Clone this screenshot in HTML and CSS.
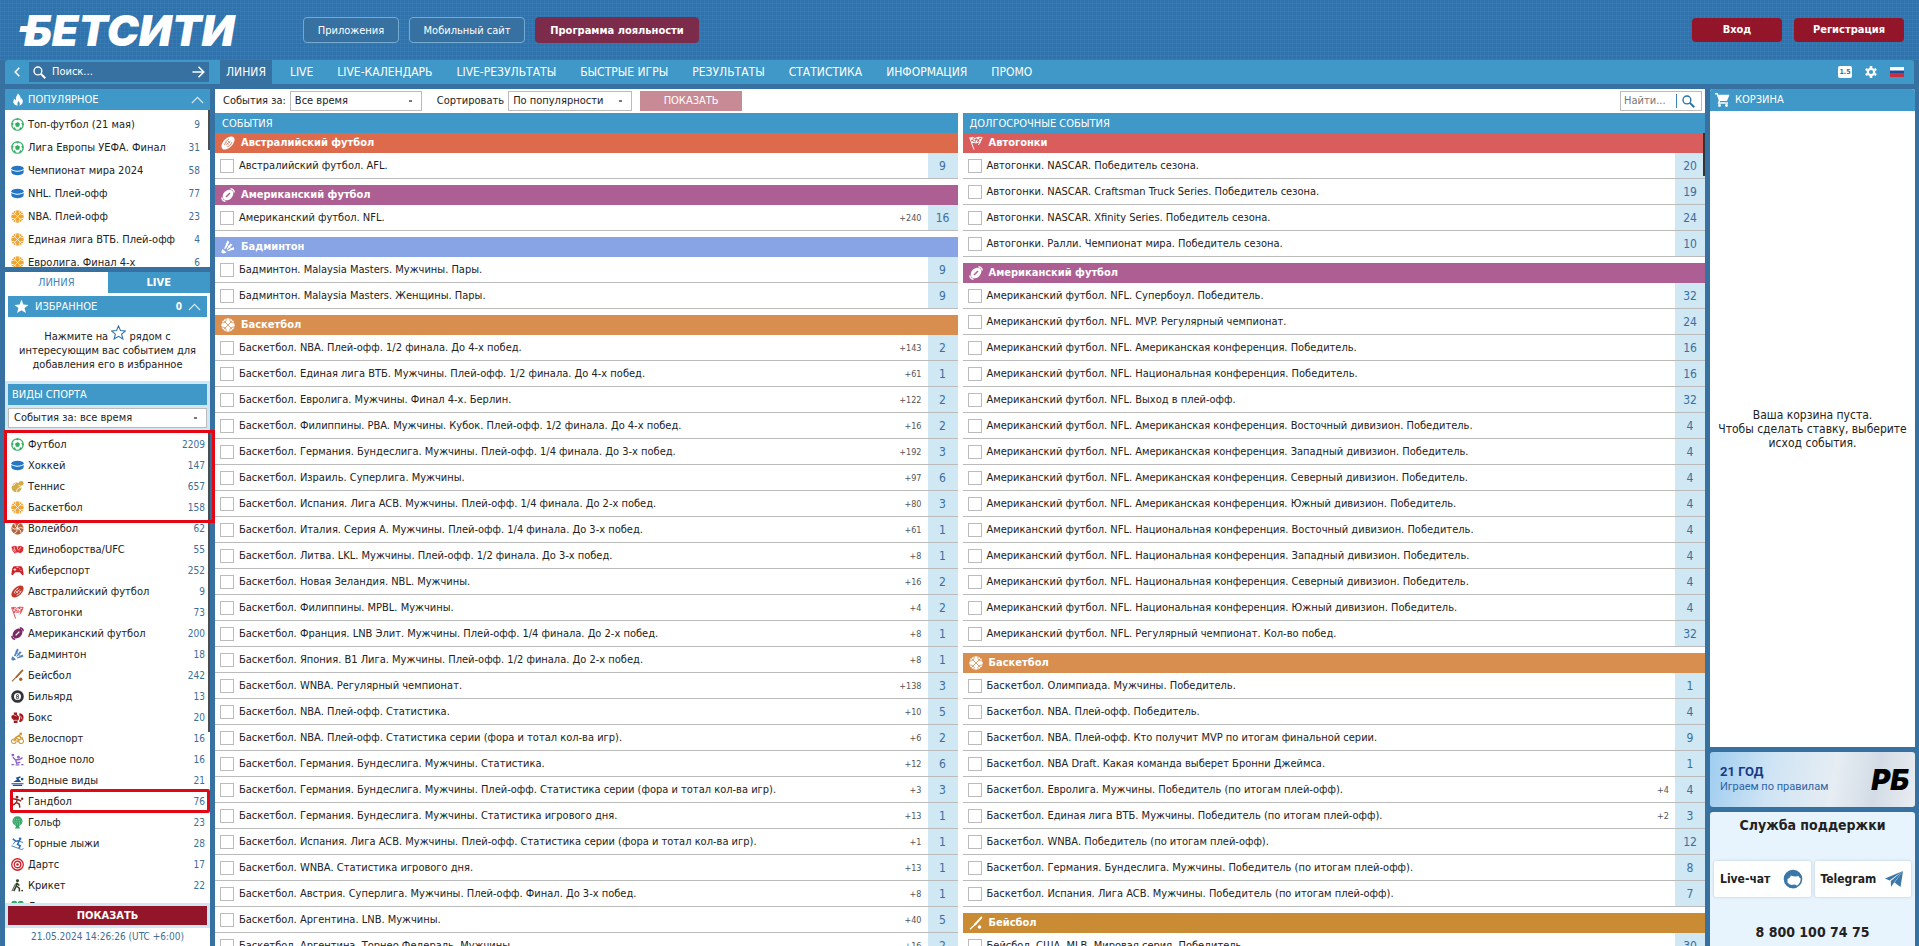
FILE: index.html
```html
<!DOCTYPE html>
<html lang="ru">
<head>
<meta charset="utf-8">
<title>Бетсити — Линия</title>
<meta name="viewport" content="width=device-width, initial-scale=1">
<link rel="stylesheet" href="styles.css">
</head>
<body>
<svg class="sprite" aria-hidden="true">
  <symbol id="soccer" viewBox="0 0 14 14"><circle cx="7" cy="7" r="6.2" fill="none" stroke="currentColor" stroke-width="1.3"/><path fill="currentColor" d="M7 4.3 9.7 6.2 8.7 9.3H5.3L4.3 6.2zM5 .8h4L7 2.8zM.8 5.2 3 6 1.4 8.6zM13.2 5.2 11 6l1.6 2.6zM3 11.8l.6-2.5 2.3 3.6zM11 11.8l-.6-2.5-2.3 3.6z"/></symbol>
  <symbol id="puck" viewBox="0 0 14 14"><ellipse cx="7" cy="4.6" rx="6.6" ry="2.7" fill="currentColor"/><path fill="currentColor" d="M.4 5.9C1.8 9 12.200 9 13.600 5.900V9.200C12.500 13.200 1.500 13.200.4 9.200z"/></symbol>
  <symbol id="basket" viewBox="0 0 14 14"><circle cx="7" cy="7" r="6.700" fill="currentColor"/><path fill="none" stroke="var(--cut,#fff)" stroke-width=".8" d="M2.300 2.300 11.700 11.700M11.700 2.300 2.300 11.700M5 .5Q6 5 .5 5M9 .5Q8 5 13.500 5M5 13.500Q6 9 .5 9M9 13.500Q8 9 13.500 9"/></symbol>
  <symbol id="tennis" viewBox="0 0 14 14"><circle cx="6" cy="8" r="5.300" fill="currentColor"/><circle cx="11" cy="3.600" r="2.600" fill="currentColor"/><path fill="none" stroke="#fff" stroke-width=".9" d="M1 6q3 0 4-3M6 13q0-5 5.500-5M8 5.500q2.500 2 5 1.500"/></symbol>
  <symbol id="volley" viewBox="0 0 14 14"><circle cx="7" cy="7" r="6.600" fill="currentColor"/><path fill="none" stroke="#fff" stroke-width=".9" d="M7 7Q4 5 4 1.200M7 7Q6 3 10 1M7 7q4-2 6.500 0M7 7q4 1 4 5M7 7q0 4-4 5.500M7 7Q3 9 1 6"/></symbol>
  <symbol id="fist" viewBox="0 0 14 14"><path fill="currentColor" d="M.5 4 4 3l3 1 3-1 3.500 1.500-.5 4-2.500 2.500L7 10l-3 1.200L1.500 8z"/><path fill="none" stroke="#fff" stroke-width=".7" d="M3.500 4v3l2 1M7 4v2.500l2 1.500M10.500 4.500 9 7M2 7l3 3"/></symbol>
  <symbol id="pad" viewBox="0 0 14 14"><path fill="currentColor" d="M3 2.500h8l1.500 1.800 1.200 7-1.500.7L9.500 9h-5L1.800 12l-1.500-.7 1.200-7z"/><path fill="none" stroke="#fff" stroke-width=".9" d="M4.200 4.500v3M2.700 6h3M9 5.200h1M10.300 7h1M6 3.500h2"/></symbol>
  <symbol id="afl" viewBox="0 0 14 14"><ellipse cx="7" cy="7" rx="8" ry="4.600" fill="currentColor" transform="rotate(-45 7 7)"/><path fill="none" stroke="var(--cut,#fff)" stroke-width=".8" d="M5 9.300 9.500 4.800M5.500 6.500l2 2M7 5l2 2M3.500 9Q4 5 8 3M6 11q4-1 5-5"/></symbol>
  <symbol id="flags" viewBox="0 0 14 14"><path fill="none" stroke="currentColor" stroke-width="1" d="M.6 1.500 5 13.500M13.300 1.500 9.500 9M1 2q3-1.500 5 .5Q9 .5 13 1.500M2.500 7q3-1.500 4.500 0 2.500-1.500 4.500-.5"/><path fill="currentColor" d="M1.500 2 3.500 1.500 4 3.500 2 4zM4 3.500 6 3.500 6.500 5.500 4.500 5zM8 2l2-1 .3 2-2 .6zM10.500 3.200l2-.2-.6 2-2 .3zM7 4.500l1.500-.6-.5 2-1.300.8zM2.600 5 4 5.200l.5 1.500-1.300.2z"/></symbol>
  <symbol id="nfl" viewBox="0 0 14 14"><ellipse cx="7" cy="7" rx="6" ry="4.500" fill="currentColor" transform="rotate(-45 7 7)"/><path fill="none" stroke="currentColor" stroke-width="1.500" d="M.8 9.500q.5 3.500 3.700 3.700M9.500.8q3.500.5 3.700 3.700"/><path stroke="var(--cut,#fff)" stroke-width="1.400" d="M5 9 9 5"/></symbol>
  <symbol id="shuttle" viewBox="0 0 14 14"><path fill="currentColor" d="M6.500.5 8.300 2 5 8.500 3 9zM9.500 3.500 11.500 4.800 6.500 9.500 5.500 9.200zM12.500 7l1 2.200L7 11.300 6.300 10.500zM1.500 9l4 3.500-3.300 1Q.2 13.500.4 11.500z"/><path stroke="currentColor" d="m5 3 3 4M8 7l4 3" stroke-width=".8"/></symbol>
  <symbol id="bat" viewBox="0 0 14 14"><path stroke="currentColor" stroke-width="2" stroke-linecap="round" d="M12.300 1.600 6 8.500"/><path stroke="currentColor" stroke-width="1.200" d="M7 7.500 1 13.300"/><circle cx="10.500" cy="11" r="1.800" fill="currentColor"/></symbol>
  <symbol id="eight" viewBox="0 0 14 14"><circle cx="7" cy="7" r="5.300" fill="none" stroke="currentColor" stroke-width="3"/><circle cx="7" cy="6" r="1.100" fill="none" stroke="currentColor"/><circle cx="7" cy="8.200" r="1.200" fill="none" stroke="currentColor"/></symbol>
  <symbol id="box" viewBox="0 0 14 14"><path fill="currentColor" d="M3 1.500h3.500V4l2 2v3L7 10.500V13H3V10L.5 7.500V5L3 4zM9 2.500q4 0 4.500 4 .3 4-3.500 5.500L8.500 11Q11 8 9 5z"/><path stroke="#fff" stroke-width=".7" d="M3 10h4M3 4l3 1.500M10 5l2 4"/></symbol>
  <symbol id="bike" viewBox="0 0 14 14"><g fill="none" stroke="currentColor" stroke-width="1.100"><circle cx="3" cy="10" r="2.500"/><circle cx="11" cy="10" r="2.500"/><path stroke-width="1.500" d="m3 10 2-4 4-2.500 1.500 3H13M5 6l3 2-1 3"/></g><circle cx="10.500" cy="2" r="1.500" fill="currentColor"/></symbol>
  <symbol id="polo" viewBox="0 0 14 14"><circle cx="2" cy="2.200" r="1.500" fill="currentColor"/><circle cx="8" cy="4.500" r="1.500" fill="currentColor"/><path fill="none" stroke="currentColor" stroke-width="1.500" d="m2 4.500 3 3 4-.5 3.500-2M5 7l1 4 4-1M.5 12.500h3M5 12.800h4M11 12.500h2.500"/></symbol>
  <symbol id="swim" viewBox="0 0 14 14"><circle cx="12" cy="5.500" r="1.400" fill="currentColor"/><path fill="currentColor" d="m5 4 5-1.500.5 1.300L8 5l3 3.500H2.500L6.500 6z"/><path fill="none" stroke="currentColor" stroke-width="1.200" d="M.5 10.500h13M2 12.300h10"/></symbol>
  <symbol id="hand" viewBox="0 0 14 14"><circle cx="6.500" cy="2.200" r="1.500" fill="currentColor"/><circle cx="12" cy="4" r="1.300" fill="currentColor"/><path fill="none" stroke="currentColor" stroke-width="1.600" d="M1.500 4 7 4.800 11 6.500M6.500 5 6 8l3 2 .5 3.500M6 8l-2.500 2L1 11"/></symbol>
  <symbol id="golf" viewBox="0 0 14 14"><path fill="currentColor" d="M7 .3a5.500 5.500 0 0 1 5.500 5.500Q12.300 9 9 10.500L8.500 12H9.500V13.500h-5V12H5.500L5 10.500Q1.700 9 1.500 5.800A5.500 5.500 0 0 1 7 .3"/><path stroke="#fff" stroke-width=".6" stroke-dasharray="1 1.500" d="M3 4h8M3.500 6.300h8M4 8.600h6"/></symbol>
  <symbol id="ski" viewBox="0 0 14 14"><circle cx="9.800" cy="2" r="1.500" fill="currentColor"/><path fill="none" stroke="currentColor" stroke-width="1.600" d="m2 2 3 2.500 4-.5-2 4 3 1.500-1.500 2.500"/><path fill="none" stroke="currentColor" stroke-width=".9" d="m.5 9.500 11 4 2-1M9 4.500l4 1.500M5 4.500 2 8"/></symbol>
  <symbol id="darts" viewBox="0 0 14 14"><g fill="none" stroke="currentColor" stroke-width="1.400"><circle cx="7" cy="7" r="6.200"/><circle cx="7" cy="7" r="3.500"/></g><circle cx="7" cy="7" r="1.400" fill="currentColor"/></symbol>
  <symbol id="cricket" viewBox="0 0 14 14"><circle cx="7" cy="2" r="1.600" fill="currentColor"/><path fill="none" stroke="currentColor" stroke-width="1.600" d="M6.500 4 5.500 8 3 13M6 7.500 9 10v3.500M6.500 4.500 9 7"/><path stroke="currentColor" stroke-width="1" d="M5 5 1 13"/><circle cx="12" cy="12.500" r="1" fill="currentColor"/></symbol>
  <symbol id="clover" viewBox="0 0 14 14"><g fill="currentColor"><circle cx="3.500" cy="4" r="3.300"/><circle cx="10.500" cy="4" r="3.300"/><circle cx="3.500" cy="10" r="3.300"/><circle cx="10.500" cy="10" r="3.300"/></g></symbol>
  <symbol id="lens" viewBox="0 0 14 14"><g fill="none" stroke="currentColor"><circle cx="5.300" cy="5.300" r="4.200" stroke-width="1.500"/><path stroke-width="2.200" d="m8.500 8.500 4.700 4.700"/></g></symbol>
  <symbol id="up" viewBox="0 0 14 8"><path fill="none" stroke="currentColor" stroke-width="1.300" d="m1 7.200 6-6 6 6"/></symbol>
  <symbol id="star" viewBox="0 0 14 14"><path d="m7 .8 1.800 4.400 4.700.3-3.600 3 1.200 4.600L7 10.600l-4.100 2.500 1.200-4.600-3.600-3 4.700-.3z"/></symbol>
</svg>

<div class="page">
  <header class="top">
    <a class="logo" href="#">БЕТСИТИ</a>
    <div class="promo-links">
      <a class="chip apps" href="#">Приложения</a>
      <a class="chip mobile" href="#">Мобильный сайт</a>
      <a class="chip loyal" href="#">Программа лояльности</a>
    </div>
    <div class="auth">
      <button class="red" type="button">Вход</button>
      <button class="red wide" type="button">Регистрация</button>
    </div>
  </header>

  <div class="nav">
    <form class="nav-search">
      <button class="back" type="button" aria-label="Свернуть"><svg width="6" height="10" viewBox="0 0 6 10"><path fill="none" stroke="#fff" stroke-width="1.600" d="M5.300.7 1.200 5l4.100 4.300"/></svg></button>
      <div class="field">
        <svg class="i"><use href="#lens"/></svg>
        <input type="text" aria-label="Поиск" placeholder="Поиск...">
        <button class="go" aria-label="Искать"><svg width="13" height="12" viewBox="0 0 13 12"><path fill="none" stroke="#fff" stroke-width="1.500" d="M.5 6h11M6.500.8 11.800 6l-5.300 5.200"/></svg></button>
      </div>
    </form>
    <nav class="menu">
      <a class="on" href="#">ЛИНИЯ</a><a href="#">LIVE</a><a href="#">LIVE-КАЛЕНДАРЬ</a><a href="#">LIVE-РЕЗУЛЬТАТЫ</a><a href="#">БЫСТРЫЕ ИГРЫ</a><a href="#">РЕЗУЛЬТАТЫ</a><a href="#">СТАТИСТИКА</a><a href="#">ИНФОРМАЦИЯ</a><a href="#">ПРОМО</a>
    </nav>
    <div class="tools">
      <button class="odds" type="button">1.5</button>
      <button type="button" aria-label="Настройки"><svg width="12" height="12" viewBox="0 0 12 12"><circle cx="6" cy="6" r="3.200" fill="none" stroke="#fff" stroke-width="2.200"/><path stroke="#fff" stroke-width="2.600" d="M6 0v2M6 10v2M.8 3l1.700 1M9.500 8l1.700 1M.8 9l1.700-1M9.500 4l1.700-1"/></svg></button>
      <button type="button" aria-label="Русский"><svg width="14" height="12" viewBox="0 0 14 12"><path fill="#fff" d="M0 1h14v4H0z"/><path fill="#1c4a9c" d="M0 4.500h14v3H0z"/><path fill="#c8303c" d="M0 7.500h14V11H0z"/></svg></button>
    </div>
  </div>

  <div class="body">
    <aside class="side">
      <section class="panel popular">
        <h2 class="bar"><svg class="i" viewBox="0 0 14 14"><path fill="#fff" d="M7.500.5Q11 4 10.500 7q1-.7 1-2 2 3.500.8 6-1 2-3.300 2.700Q10.500 11 8 8.500 6 11 7 13.700 3.500 13 2.500 10.500 2 8 4 6q0 1.500 1 2Q5 4 7.500.5"/></svg><span>ПОПУЛЯРНОЕ</span><svg class="up"><use href="#up"/></svg></h2>
        <ul class="list pop">
          <li><svg class="i soccer"><use href="#soccer"/></svg><a href="#">Топ-футбол (21 мая)</a><b>9</b></li>
          <li><svg class="i soccer"><use href="#soccer"/></svg><a href="#">Лига Европы УЕФА. Финал</a><b>31</b></li>
          <li><svg class="i puck"><use href="#puck"/></svg><a href="#">Чемпионат мира 2024</a><b>58</b></li>
          <li><svg class="i puck"><use href="#puck"/></svg><a href="#">NHL. Плей-офф</a><b>77</b></li>
          <li><svg class="i basket"><use href="#basket"/></svg><a href="#">NBA. Плей-офф</a><b>23</b></li>
          <li><svg class="i basket"><use href="#basket"/></svg><a href="#">Единая лига ВТБ. Плей-офф</a><b>4</b></li>
          <li><svg class="i basket"><use href="#basket"/></svg><a href="#">Евролига. Финал 4-х</a><b>6</b></li>
        </ul>
      </section>
      <section class="panel sports">
        <div class="tabs"><button class="on" type="button">ЛИНИЯ</button><button type="button">LIVE</button></div>
        <div class="fav">
          <h2 class="bar"><svg class="i big" fill="#fff" viewBox="0 0 14 14"><use href="#star"/></svg><span>ИЗБРАННОЕ</span><em>0</em><svg class="up"><use href="#up"/></svg></h2>
          <p>Нажмите на <svg class="i star" fill="none" stroke="#2b72ad" viewBox="0 0 14 14"><use href="#star"/></svg> рядом с интересующим вас событием для добавления его в избранное</p>
        </div>
        <div class="kinds">
          <h2 class="bar">ВИДЫ СПОРТА</h2>
          <select aria-label="Период событий"><option>События за: все время</option></select>
        </div>
        <ul class="list all">
          <li><svg class="i soccer"><use href="#soccer"/></svg><a href="#">Футбол</a><b>2209</b></li>
          <li><svg class="i puck"><use href="#puck"/></svg><a href="#">Хоккей</a><b>147</b></li>
          <li><svg class="i tennis"><use href="#tennis"/></svg><a href="#">Теннис</a><b>657</b></li>
          <li><svg class="i basket"><use href="#basket"/></svg><a href="#">Баскетбол</a><b>158</b></li>
          <li><svg class="i volley"><use href="#volley"/></svg><a href="#">Волейбол</a><b>62</b></li>
          <li><svg class="i fist"><use href="#fist"/></svg><a href="#">Единоборства/UFC</a><b>55</b></li>
          <li><svg class="i pad"><use href="#pad"/></svg><a href="#">Киберспорт</a><b>252</b></li>
          <li><svg class="i afl"><use href="#afl"/></svg><a href="#">Австралийский футбол</a><b>9</b></li>
          <li><svg class="i flags"><use href="#flags"/></svg><a href="#">Автогонки</a><b>73</b></li>
          <li><svg class="i nfl"><use href="#nfl"/></svg><a href="#">Американский футбол</a><b>200</b></li>
          <li><svg class="i shuttle"><use href="#shuttle"/></svg><a href="#">Бадминтон</a><b>18</b></li>
          <li><svg class="i bat"><use href="#bat"/></svg><a href="#">Бейсбол</a><b>242</b></li>
          <li><svg class="i eight"><use href="#eight"/></svg><a href="#">Бильярд</a><b>13</b></li>
          <li><svg class="i box"><use href="#box"/></svg><a href="#">Бокс</a><b>20</b></li>
          <li><svg class="i bike"><use href="#bike"/></svg><a href="#">Велоспорт</a><b>16</b></li>
          <li><svg class="i polo"><use href="#polo"/></svg><a href="#">Водное поло</a><b>16</b></li>
          <li><svg class="i swim"><use href="#swim"/></svg><a href="#">Водные виды</a><b>21</b></li>
          <li><svg class="i hand"><use href="#hand"/></svg><a href="#">Гандбол</a><b>76</b></li>
          <li><svg class="i golf"><use href="#golf"/></svg><a href="#">Гольф</a><b>23</b></li>
          <li><svg class="i ski"><use href="#ski"/></svg><a href="#">Горные лыжи</a><b>28</b></li>
          <li><svg class="i darts"><use href="#darts"/></svg><a href="#">Дартс</a><b>17</b></li>
          <li><svg class="i cricket"><use href="#cricket"/></svg><a href="#">Крикет</a><b>22</b></li>
          <li><svg class="i clover"><use href="#clover"/></svg><a href="#">Лотереи</a></li>
        </ul>
        <div class="show"><button type="button">ПОКАЗАТЬ</button></div>
        <time class="clock">21.05.2024 14:26:26 (UTC +6:00)</time>
        <div class="mark mark-top"></div>
        <div class="mark mark-hand"></div>
      </section>
    </aside>

    <main class="main">
      <form class="filter">
        <label for="period">События за:</label>
        <select id="period" class="period"><option>Все время</option></select>
        <label for="sort">Сортировать</label>
        <select id="sort" class="sort"><option>По популярности</option></select>
        <button class="apply" type="button">ПОКАЗАТЬ</button>
        <div class="find"><input type="text" aria-label="Найти" placeholder="Найти..."><button type="button" aria-label="Найти"><svg class="i"><use href="#lens"/></svg></button></div>
      </form>
      <div class="cols">
        <section class="col">
          <h2 class="col-head">СОБЫТИЯ</h2>
          <div class="group">
            <h3 class="h-afl"><svg class="i"><use href="#afl"/></svg>Австралийский футбол</h3>
            <div class="row"><label><input type="checkbox">Австралийский футбол. AFL.</label><a href="#">9</a></div>
          </div>
          <div class="group">
            <h3 class="h-nfl"><svg class="i"><use href="#nfl"/></svg>Американский футбол</h3>
            <div class="row"><label><input type="checkbox">Американский футбол. NFL.</label><small>+240</small><a href="#">16</a></div>
          </div>
          <div class="group">
            <h3 class="h-bad"><svg class="i"><use href="#shuttle"/></svg>Бадминтон</h3>
            <div class="row"><label><input type="checkbox">Бадминтон. Malaysia Masters. Мужчины. Пары.</label><a href="#">9</a></div>
            <div class="row"><label><input type="checkbox">Бадминтон. Malaysia Masters. Женщины. Пары.</label><a href="#">9</a></div>
          </div>
          <div class="group">
            <h3 class="h-bas"><svg class="i"><use href="#basket"/></svg>Баскетбол</h3>
            <div class="row"><label><input type="checkbox">Баскетбол. NBA. Плей-офф. 1/2 финала. До 4-х побед.</label><small>+143</small><a href="#">2</a></div>
            <div class="row"><label><input type="checkbox">Баскетбол. Единая лига ВТБ. Мужчины. Плей-офф. 1/2 финала. До 4-х побед.</label><small>+61</small><a href="#">1</a></div>
            <div class="row"><label><input type="checkbox">Баскетбол. Евролига. Мужчины. Финал 4-х. Берлин.</label><small>+122</small><a href="#">2</a></div>
            <div class="row"><label><input type="checkbox">Баскетбол. Филиппины. PBA. Мужчины. Кубок. Плей-офф. 1/2 финала. До 4-х побед.</label><small>+16</small><a href="#">2</a></div>
            <div class="row"><label><input type="checkbox">Баскетбол. Германия. Бундеслига. Мужчины. Плей-офф. 1/4 финала. До 3-х побед.</label><small>+192</small><a href="#">3</a></div>
            <div class="row"><label><input type="checkbox">Баскетбол. Израиль. Суперлига. Мужчины.</label><small>+97</small><a href="#">6</a></div>
            <div class="row"><label><input type="checkbox">Баскетбол. Испания. Лига ACB. Мужчины. Плей-офф. 1/4 финала. До 2-х побед.</label><small>+80</small><a href="#">3</a></div>
            <div class="row"><label><input type="checkbox">Баскетбол. Италия. Серия А. Мужчины. Плей-офф. 1/4 финала. До 3-х побед.</label><small>+61</small><a href="#">1</a></div>
            <div class="row"><label><input type="checkbox">Баскетбол. Литва. LKL. Мужчины. Плей-офф. 1/2 финала. До 3-х побед.</label><small>+8</small><a href="#">1</a></div>
            <div class="row"><label><input type="checkbox">Баскетбол. Новая Зеландия. NBL. Мужчины.</label><small>+16</small><a href="#">2</a></div>
            <div class="row"><label><input type="checkbox">Баскетбол. Филиппины. MPBL. Мужчины.</label><small>+4</small><a href="#">2</a></div>
            <div class="row"><label><input type="checkbox">Баскетбол. Франция. LNB Элит. Мужчины. Плей-офф. 1/4 финала. До 2-х побед.</label><small>+8</small><a href="#">1</a></div>
            <div class="row"><label><input type="checkbox">Баскетбол. Япония. B1 Лига. Мужчины. Плей-офф. 1/2 финала. До 2-х побед.</label><small>+8</small><a href="#">1</a></div>
            <div class="row"><label><input type="checkbox">Баскетбол. WNBA. Регулярный чемпионат.</label><small>+138</small><a href="#">3</a></div>
            <div class="row"><label><input type="checkbox">Баскетбол. NBA. Плей-офф. Статистика.</label><small>+10</small><a href="#">5</a></div>
            <div class="row"><label><input type="checkbox">Баскетбол. NBA. Плей-офф. Статистика серии (фора и тотал кол-ва игр).</label><small>+6</small><a href="#">2</a></div>
            <div class="row"><label><input type="checkbox">Баскетбол. Германия. Бундеслига. Мужчины. Статистика.</label><small>+12</small><a href="#">6</a></div>
            <div class="row"><label><input type="checkbox">Баскетбол. Германия. Бундеслига. Мужчины. Плей-офф. Статистика серии (фора и тотал кол-ва игр).</label><small>+3</small><a href="#">3</a></div>
            <div class="row"><label><input type="checkbox">Баскетбол. Германия. Бундеслига. Мужчины. Статистика игрового дня.</label><small>+13</small><a href="#">1</a></div>
            <div class="row"><label><input type="checkbox">Баскетбол. Испания. Лига ACB. Мужчины. Плей-офф. Статистика серии (фора и тотал кол-ва игр).</label><small>+1</small><a href="#">1</a></div>
            <div class="row"><label><input type="checkbox">Баскетбол. WNBA. Статистика игрового дня.</label><small>+13</small><a href="#">1</a></div>
            <div class="row"><label><input type="checkbox">Баскетбол. Австрия. Суперлига. Мужчины. Плей-офф. Финал. До 3-х побед.</label><small>+8</small><a href="#">1</a></div>
            <div class="row"><label><input type="checkbox">Баскетбол. Аргентина. LNB. Мужчины.</label><small>+40</small><a href="#">5</a></div>
            <div class="row"><label><input type="checkbox">Баскетбол. Аргентина. Торнео Федераль. Мужчины.</label><small>+16</small><a href="#">2</a></div>
          </div>
        </section>
        <section class="col scroll">
          <h2 class="col-head">ДОЛГОСРОЧНЫЕ СОБЫТИЯ</h2>
          <div class="group">
            <h3 class="h-auto"><svg class="i"><use href="#flags"/></svg>Автогонки</h3>
            <div class="row"><label><input type="checkbox">Автогонки. NASCAR. Победитель сезона.</label><a href="#">20</a></div>
            <div class="row"><label><input type="checkbox">Автогонки. NASCAR. Craftsman Truck Series. Победитель сезона.</label><a href="#">19</a></div>
            <div class="row"><label><input type="checkbox">Автогонки. NASCAR. Xfinity Series. Победитель сезона.</label><a href="#">24</a></div>
            <div class="row"><label><input type="checkbox">Автогонки. Ралли. Чемпионат мира. Победитель сезона.</label><a href="#">10</a></div>
          </div>
          <div class="group">
            <h3 class="h-nfl"><svg class="i"><use href="#nfl"/></svg>Американский футбол</h3>
            <div class="row"><label><input type="checkbox">Американский футбол. NFL. Супербоул. Победитель.</label><a href="#">32</a></div>
            <div class="row"><label><input type="checkbox">Американский футбол. NFL. MVP. Регулярный чемпионат.</label><a href="#">24</a></div>
            <div class="row"><label><input type="checkbox">Американский футбол. NFL. Американская конференция. Победитель.</label><a href="#">16</a></div>
            <div class="row"><label><input type="checkbox">Американский футбол. NFL. Национальная конференция. Победитель.</label><a href="#">16</a></div>
            <div class="row"><label><input type="checkbox">Американский футбол. NFL. Выход в плей-офф.</label><a href="#">32</a></div>
            <div class="row"><label><input type="checkbox">Американский футбол. NFL. Американская конференция. Восточный дивизион. Победитель.</label><a href="#">4</a></div>
            <div class="row"><label><input type="checkbox">Американский футбол. NFL. Американская конференция. Западный дивизион. Победитель.</label><a href="#">4</a></div>
            <div class="row"><label><input type="checkbox">Американский футбол. NFL. Американская конференция. Северный дивизион. Победитель.</label><a href="#">4</a></div>
            <div class="row"><label><input type="checkbox">Американский футбол. NFL. Американская конференция. Южный дивизион. Победитель.</label><a href="#">4</a></div>
            <div class="row"><label><input type="checkbox">Американский футбол. NFL. Национальная конференция. Восточный дивизион. Победитель.</label><a href="#">4</a></div>
            <div class="row"><label><input type="checkbox">Американский футбол. NFL. Национальная конференция. Западный дивизион. Победитель.</label><a href="#">4</a></div>
            <div class="row"><label><input type="checkbox">Американский футбол. NFL. Национальная конференция. Северный дивизион. Победитель.</label><a href="#">4</a></div>
            <div class="row"><label><input type="checkbox">Американский футбол. NFL. Национальная конференция. Южный дивизион. Победитель.</label><a href="#">4</a></div>
            <div class="row"><label><input type="checkbox">Американский футбол. NFL. Регулярный чемпионат. Кол-во побед.</label><a href="#">32</a></div>
          </div>
          <div class="group">
            <h3 class="h-bas"><svg class="i"><use href="#basket"/></svg>Баскетбол</h3>
            <div class="row"><label><input type="checkbox">Баскетбол. Олимпиада. Мужчины. Победитель.</label><a href="#">1</a></div>
            <div class="row"><label><input type="checkbox">Баскетбол. NBA. Плей-офф. Победитель.</label><a href="#">4</a></div>
            <div class="row"><label><input type="checkbox">Баскетбол. NBA. Плей-офф. Кто получит MVP по итогам финальной серии.</label><a href="#">9</a></div>
            <div class="row"><label><input type="checkbox">Баскетбол. NBA Draft. Какая команда выберет Бронни Джеймса.</label><a href="#">1</a></div>
            <div class="row"><label><input type="checkbox">Баскетбол. Евролига. Мужчины. Победитель (по итогам плей-офф).</label><small>+4</small><a href="#">4</a></div>
            <div class="row"><label><input type="checkbox">Баскетбол. Единая лига ВТБ. Мужчины. Победитель (по итогам плей-офф).</label><small>+2</small><a href="#">3</a></div>
            <div class="row"><label><input type="checkbox">Баскетбол. WNBA. Победитель (по итогам плей-офф).</label><a href="#">12</a></div>
            <div class="row"><label><input type="checkbox">Баскетбол. Германия. Бундеслига. Мужчины. Победитель (по итогам плей-офф).</label><a href="#">8</a></div>
            <div class="row"><label><input type="checkbox">Баскетбол. Испания. Лига ACB. Мужчины. Победитель (по итогам плей-офф).</label><a href="#">7</a></div>
          </div>
          <div class="group">
            <h3 class="h-base"><svg class="i"><use href="#bat"/></svg>Бейсбол</h3>
            <div class="row"><label><input type="checkbox">Бейсбол. США. MLB. Мировая серия. Победитель.</label><a href="#">30</a></div>
          </div>
        </section>
      </div>
    </main>

    <aside class="right">
      <section class="cart">
        <h2 class="bar"><svg class="cart-i" width="15" height="14" viewBox="0 0 15 14"><path fill="#fff" d="M0 0h2.600l.8 1.800H14.500L12 8H5.200L4.500 9.300H13v1.400H2.500L3.800 7.600 1.700 1.400H0z"/><circle cx="4.500" cy="12.500" r="1.400" fill="#fff"/><circle cx="11.500" cy="12.500" r="1.400" fill="#fff"/></svg><span>КОРЗИНА</span></h2>
        <p>Ваша корзина пуста.<br>Чтобы сделать ставку, выберите исход события.</p>
      </section>
      <a class="banner" href="#"><span><strong>21 ГОД</strong><br>Играем по правилам</span><span class="rb">РБ</span></a>
      <section class="support">
        <h2>Служба поддержки</h2>
        <div class="contacts">
          <a href="#">Live-чат<svg width="20" height="20" viewBox="0 0 20 20"><circle cx="10" cy="10" r="8.500" fill="none" stroke="#3b77a8" stroke-width="1.600"/><path fill="#3b77a8" d="M1.500 11Q1 4 7 1.800q7-2 10.500 3.700.8 2 .3 4Q16 8.500 15.500 7q-4 1-7.500-.5Q7 9 4.500 10v3.500Q7 17 11 15.500l2.500.5v2.800Q8 20.500 4 17 1.800 14 1.500 11"/></svg></a>
          <a href="#">Telegram<svg width="18" height="16" viewBox="0 0 18 16"><path fill="#3b77a8" d="M18 0 0 7.500l4.500 2zM18 0 5.800 10 6 16l2.700-4z"/><path fill="#3b77a8" d="m18 0-8.500 11.500L15.500 16z"/></svg></a>
        </div>
        <strong class="phone">8 800 100 74 75</strong>
      </section>
    </aside>
  </div>
</div>
</body>
</html>
```
FILE: styles.css
```css
* { box-sizing: border-box; }
body, h2, h3, p, ul { margin: 0; padding: 0; }
body {
  background: #3771a1;
  color: #222;
  font: 11px/14px "DejaVu Sans Condensed", "Noto Sans", sans-serif;
}
a { color: inherit; text-decoration: none; }
button, input, select { font: inherit; color: inherit; margin: 0; padding: 0; border: 0; background: none; border-radius: 0; }
h2, h3 { font-size: 11px; font-weight: normal; }
.sprite { position: absolute; width: 0; height: 0; }
.i { width: 13px; height: 13px; flex: none; }
.page { height: 100vh; display: flex; flex-direction: column; overflow: hidden; }

/* header */
.top {
  display: flex;
  align-items: center;
  height: 60px;
  flex: none;
  padding: 0 15px 0 24px;
  background:
    repeating-linear-gradient(0deg, rgba(60, 140, 190, .3) 0 1px, transparent 1px 4px),
    repeating-linear-gradient(90deg, rgba(60, 140, 190, .3) 0 1px, transparent 1px 4px),
    #3172ac;
}
.logo { position: relative; width: 279px; color: #fff; font: italic 900 43px/50px Inter, sans-serif; }
.logo::before { content: ""; position: absolute; left: -4px; top: 21px; width: 12px; height: 6px; background: #fff; transform: skewX(-12deg); }
.promo-links { display: flex; gap: 10px; flex: 1; }
.chip { height: 26px; border: 1px solid #75aad0; border-radius: 4px; background: #3771a1; color: #fff; text-align: center; line-height: 26px; }
.apps { width: 96px; }
.mobile { width: 116px; }
.loyal { width: 164px; border-color: #7c2c4a; background: #7c2c4a; font-weight: bold; }
.auth { display: flex; gap: 12px; }
.red { width: 90px; height: 24px; border-radius: 4px; background: #92152a; color: #fff; font-weight: bold; }
.red.wide { width: 110px; }

.nav { display: flex; height: 24px; flex: none; margin: 0 5px; background: #3f98c7; border-radius: 3px 3px 0 0; color: #fff; }
.nav-search { display: flex; width: 215px; align-items: center; }
.back { display: grid; place-items: center; width: 24px; height: 20px; }
.field { display: flex; align-items: center; width: 180px; height: 20px; padding: 0 4px; background: #3771a1; }
.field input { flex: 1; min-width: 0; margin-left: 6px; }
.field ::placeholder { color: #fff; opacity: 1; }
.go { height: 12px; line-height: 0; }
.menu { display: flex; flex: 1; gap: 12px; font-size: 12px; line-height: 25px; }
.menu a { padding: 0 6px; }
.menu .on { background: #3771a1; }
.tools { display: flex; align-items: center; gap: 13px; padding-right: 10px; }
.tools button { height: 12px; line-height: 0; }
.tools .odds { width: 14px; background: #fff; border-radius: 2px; color: #3771a1; font-size: 7px; font-weight: bold; line-height: 12px; }

.body { flex: 1; min-height: 0; display: grid; grid-template-columns: 205px minmax(0, 1fr) 205px; gap: 5px; padding: 5px 4px 0 5px; }

/* sidebar */
.side { display: flex; flex-direction: column; gap: 5px; min-height: 0; }
.bar { display: flex; align-items: center; height: 21px; padding: 0 6px; background: #3f98c7; color: #fff; }
.bar span { flex: 1; }
.bar em { font-style: normal; font-weight: bold; font-size: 10px; margin-right: 6px; }
.up { width: 13px; height: 8px; color: #d4eaf6; }
.popular .bar .i { margin-right: 4px; }
.list { list-style: none; background: #fff; overflow: hidden; position: relative; }
.list::after { content: ""; position: absolute; top: 0; right: 0; width: 2px; background: #4d4d4d; }
.list li { display: flex; align-items: center; padding-left: 6px; }
.list a { flex: 1; margin-left: 4px; white-space: nowrap; }
.list b { font-weight: normal; color: #3d6e96; font-size: 10px; }
.pop { height: 157px; padding-top: 3px; }
.pop::after { height: 40px; }
.pop li { height: 23px; padding-right: 10px; }
.all { flex: 1; min-height: 0; padding-top: 3px; }
.all::after { height: 301px; }
.all li { height: 21px; padding-right: 5px; }
.soccer { color: #2fae62; }
.puck { color: #2477c4; }
.basket { color: #f0a431; }
.tennis { color: #d2ac46; }
.volley { color: #b3653c; }
.fist { color: #dc2d35; }
.pad { color: #cf2127; }
.afl { color: #c0392b; }
.flags { color: #d9434a; }
.nfl { color: #7b2a66; }
.shuttle { color: #4a82c0; }
.bat { color: #a8622c; }
.eight { color: #33343a; }
.box { color: #a3171f; }
.bike { color: #d09a35; }
.polo { color: #8b62c8; }
.swim { color: #1f4f96; }
.hand { color: #8a2b25; }
.golf, .clover { color: #3aa76a; }
.ski { color: #2a6cb4; }
.darts { color: #cf1f2b; }
.cricket { color: #2f3d22; }

.sports { position: relative; flex: 1; min-height: 0; display: flex; flex-direction: column; background: #fff; }
.tabs { display: grid; grid-template-columns: 1fr 1fr; height: 21px; flex: none; }
.tabs button { background: #3f98c7; color: #fff; font-weight: bold; }
.tabs .on { background: #fff; color: #3f86b8; font-weight: normal; }
.fav { height: 88px; flex: none; padding: 3px 3px 0; }
.fav .big { width: 15px; height: 15px; margin-right: 6px; }
.fav p { padding: 12px 5px 0; text-align: center; }
.fav .star { width: 15px; height: 15px; margin: -4px 0 0; vertical-align: 0; }
.kinds { flex: none; padding: 3px; background: #cfe7f2; display: grid; gap: 3px; }
.kinds .bar { padding: 0 4px; }
select { appearance: none; height: 20px; padding: 0 5px; border: 1px solid #bbb; background: #fff linear-gradient(#777, #777) right 9px center / 3px 2px no-repeat; }
.show { flex: none; padding: 3px; background: #cfe7f2; display: grid; }
.show button { height: 19px; background: #92152a; color: #fff; font-weight: bold; }
.clock { flex: none; height: 18px; font-size: 10px; line-height: 18px; text-align: center; color: #3d6e96; }
.mark { position: absolute; border: 3px solid #e30613; }
.mark-top { left: -1px; top: 158px; width: 211px; height: 93px; }
.mark-hand { left: 5px; top: 517px; width: 200px; height: 24px; border-radius: 2px; }

/* events */
.main { display: flex; flex-direction: column; min-height: 0; background: #fff; }
.filter { display: flex; align-items: center; height: 24px; flex: none; padding: 0 3px 0 8px; }
.filter select { margin-left: 4px; padding: 0 4px; }
.period { width: 132px; margin-right: 15px; }
.sort { width: 124px; margin-right: 8px; }
.apply { width: 102px; height: 20px; background: #c88b95; color: #fff; }
.find { display: flex; align-items: center; width: 82px; height: 20px; margin-left: auto; padding: 0 6px 0 3px; border: 1px solid #bbb; }
.find input { flex: 1; min-width: 0; }
.find button { height: 14px; padding-left: 5px; border-left: 1px solid #3f86b8; color: #2b72ad; line-height: 0; }
.cols { flex: 1; min-height: 0; display: grid; grid-template-columns: minmax(0, 1fr) minmax(0, 1fr); gap: 5px; overflow: hidden; }
.col { position: relative; }
.scroll::after { content: ""; position: absolute; top: 20px; right: 0; width: 2px; height: 43px; background: #333; }
.col-head { height: 20px; padding: 0 7px; background: #3f98c7; color: #fff; line-height: 21px; }
.group { margin-bottom: 6px; }
.group h3 { display: flex; align-items: center; gap: 6px; height: 20px; padding: 0 6px; color: #fff; font-weight: bold; }
.group h3 .i { width: 14px; height: 14px; }
.h-afl { --cut: #dd6b4b; background: #dd6b4b; }
.h-nfl { --cut: #ad5e93; background: #ad5e93; }
.h-bad { background: #88a4e4; }
.h-bas { --cut: #d78e4f; background: #d78e4f; }
.h-auto { background: #d95d5d; }
.h-base { background: #ca8b35; }
.row { display: flex; align-items: center; height: 26px; border-bottom: 1px solid #bbb; }
.row label { flex: 1; display: flex; align-items: center; gap: 5px; padding: 1px 0 0 5px; white-space: nowrap; }
.row input { appearance: none; width: 14px; height: 14px; border: 1px solid #bbb; background: #fff; }
.row small { margin-right: 6px; color: #555; font-size: 9px; }
.row a { width: 30px; align-self: stretch; background: #cfe8f3; color: #3d6ea0; font-size: 12px; line-height: 27px; text-align: center; }

/* right column */
.right { display: flex; flex-direction: column; gap: 5px; min-height: 0; }
.cart { flex: 1; display: flex; flex-direction: column; background: #fff; border-radius: 3px 3px 0 0; overflow: hidden; }
.cart .bar { height: 22px; padding: 0 5px; gap: 5px; }
.cart p { flex: 1; display: flex; flex-direction: column; justify-content: center; padding: 0 4px; font-size: 12px; text-align: center; }
.banner { display: flex; justify-content: space-between; align-items: center; height: 55px; padding: 0 6px 0 10px; border-radius: 3px; background: linear-gradient(100deg, #9fcdf0, #cfe4f4 30%, #e6edf3 60%, #d3dce6 80%, #e9edf1); color: #2f64a5; font: 11px/14px Roboto, sans-serif; }
.banner strong { color: #163a86; font-size: 13px; }
.rb { color: #000; font: italic 900 29px/30px Inter, sans-serif; }
.support { display: flex; flex-direction: column; align-items: center; height: 134px; background: #e7f4fd; border-radius: 3px 3px 0 0; }
.support h2 { height: 49px; padding-top: 4px; font-size: 14px; line-height: 18px; font-weight: bold; }
.contacts { display: grid; grid-template-columns: 1fr 1fr; gap: 4px; width: 100%; padding: 0 4px; font-size: 12px; font-weight: bold; }
.contacts a { display: flex; align-items: center; justify-content: space-between; height: 36px; padding: 0 8px 0 6px; background: #fff; border-radius: 2px; box-shadow: 0 0 3px #b5c8d8; }
.phone { margin-top: 26px; font-size: 14px; line-height: 18px; }
```
